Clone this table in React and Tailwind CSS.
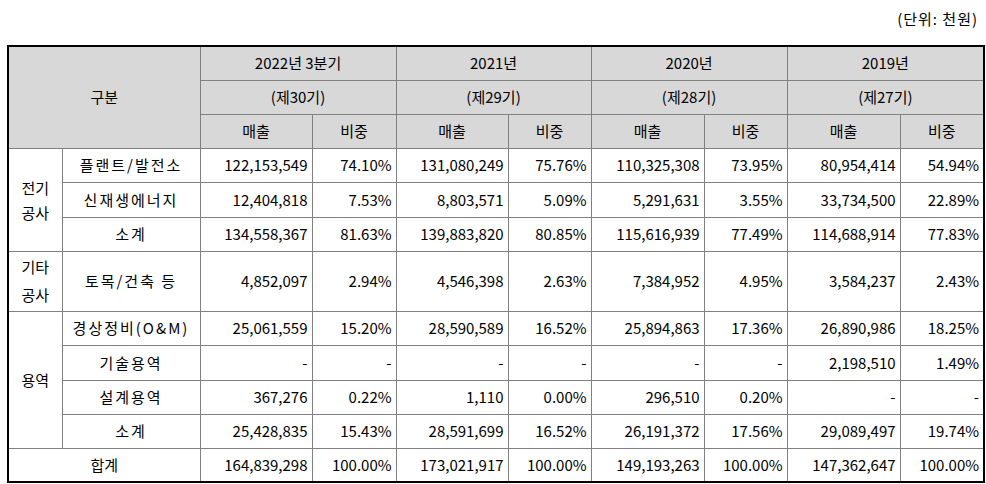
const years = [
	{ year: "2022년 3분기", term: "(제30기)" },
	{ year: "2021년", term: "(제29기)" },
	{ year: "2020년", term: "(제28기)" },
	{ year: "2019년", term: "(제27기)" },
];

const groups = [
	{
		name: ["전기", "공사"],
		lead: "leading-[25px]",
		rows: [
			{ label: "플랜트/발전소", h: "h-[34px]", vals: ["122,153,549", "74.10%", "131,080,249", "75.76%", "110,325,308", "73.95%", "80,954,414", "54.94%"] },
			{ label: "신재생에너지", h: "h-[35px]", vals: ["12,404,818", "7.53%", "8,803,571", "5.09%", "5,291,631", "3.55%", "33,734,500", "22.89%"] },
			{ label: "소계", h: "h-[34px]", vals: ["134,558,367", "81.63%", "139,883,820", "80.85%", "115,616,939", "77.49%", "114,688,914", "77.83%"] },
		],
	},
	{
		name: ["기타", "공사"],
		lead: "leading-[28px]",
		rows: [
			{ label: "토목/건축 등", h: "h-[60px]", vals: ["4,852,097", "2.94%", "4,546,398", "2.63%", "7,384,952", "4.95%", "3,584,237", "2.43%"] },
		],
	},
	{
		name: ["용역"],
		lead: "leading-[25px]",
		rows: [
			{ label: "경상정비(O&M)", h: "h-[34px]", vals: ["25,061,559", "15.20%", "28,590,589", "16.52%", "25,894,863", "17.36%", "26,890,986", "18.25%"] },
			{ label: "기술용역", h: "h-[35px]", vals: ["-", "-", "-", "-", "-", "-", "2,198,510", "1.49%"] },
			{ label: "설계용역", h: "h-[34px]", vals: ["367,276", "0.22%", "1,110", "0.00%", "296,510", "0.20%", "-", "-"] },
			{ label: "소계", h: "h-[34px]", vals: ["25,428,835", "15.43%", "28,591,699", "16.52%", "26,191,372", "17.56%", "29,089,497", "19.74%"] },
		],
	},
];

const total = ["164,839,298", "100.00%", "173,021,917", "100.00%", "149,193,263", "100.00%", "147,362,647", "100.00%"];

const cell = "border border-[#808080] p-0 font-normal";
const head = `${cell} text-center`;
const num = `${cell} text-right pr-[4px]`;

export default function App() {
	return (
		<div className="w-[986px] h-[484px] bg-white text-black text-[15px] font-['Noto_Sans_CJK_KR','Noto_Sans',sans-serif] overflow-hidden">
			{/* 단위 */}
			<div className="h-[45px] flex items-start justify-end pt-[9px] pr-[8px] leading-[20px] tracking-[1px]">
				(단위: 천원)
			</div>
			<table className="ml-[7px] w-[976px] table-fixed border-collapse border-2 border-black leading-[20px]">
				<colgroup>
					<col className="w-[54px]" />
					<col className="w-[138px]" />
					<col className="w-[112px]" />
					<col className="w-[84px]" />
					<col className="w-[112px]" />
					<col className="w-[83px]" />
					<col className="w-[113px]" />
					<col className="w-[83px]" />
					<col className="w-[113px]" />
					<col className="w-[84px]" />
				</colgroup>
				<tbody>
					{/* 헤더 */}
					<tr className="h-[34px] bg-[#d8d8d8]">
						<td rowSpan={3} colSpan={2} className={head}>구분</td>
						{years.map((y) => (
							<td key={y.year} colSpan={2} className={head}>{y.year}</td>
						))}
					</tr>
					<tr className="h-[34px] bg-[#d8d8d8]">
						{years.map((y) => (
							<td key={y.term} colSpan={2} className={head}>{y.term}</td>
						))}
					</tr>
					<tr className="h-[34px] bg-[#d8d8d8]">
						{years.flatMap((y) => [
							<td key={y.year + "a"} className={head}>매출</td>,
							<td key={y.year + "b"} className={head}>비중</td>,
						])}
					</tr>
					{/* 본문 */}
					{groups.map((g) =>
						g.rows.map((r, i) => (
							<tr key={g.name.join("") + r.label} className={r.h}>
								{i === 0 && (
									<td rowSpan={g.rows.length} className={`${cell} text-center ${g.lead}`}>
										{g.name.map((n) => (
											<div key={n}>{n}</div>
										))}
									</td>
								)}
								<td className={`${cell} text-center tracking-[2px]`}>{r.label}</td>
								{r.vals.map((v, j) => (
									<td key={j} className={num}>{v}</td>
								))}
							</tr>
						))
					)}
					<tr className="h-[34px]">
						<td colSpan={2} className={`${cell} text-center`}>합계</td>
						{total.map((v, j) => (
							<td key={j} className={num}>{v}</td>
						))}
					</tr>
				</tbody>
			</table>
		</div>
	);
}
